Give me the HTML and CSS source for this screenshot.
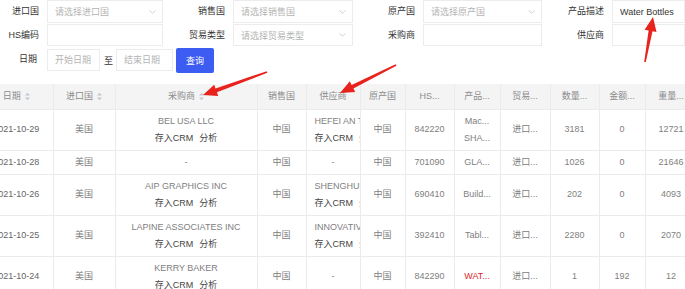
FILE: index.html
```html
<!DOCTYPE html>
<html>
<head>
    <title>海关数据查询</title>
    <link rel="stylesheet" href="styles.css">
</head>
<body>
    <div class="page">
        <!-- Filters -->
        <div class="filters">
            <label class="filter-label">进口国</label>
            <div class="field select"><span class="placeholder">请选择进口国</span><svg class="caret" width="7" height="4" viewBox="0 0 7 4"><path d="M0.5 0.5 L3.5 3.2 L6.5 0.5" fill="none" stroke="#c8cbd0" stroke-width="0.9"/></svg></div>
            <label class="filter-label">销售国</label>
            <div class="field select"><span class="placeholder">请选择销售国</span><svg class="caret" width="7" height="4" viewBox="0 0 7 4"><path d="M0.5 0.5 L3.5 3.2 L6.5 0.5" fill="none" stroke="#c8cbd0" stroke-width="0.9"/></svg></div>
            <label class="filter-label">原产国</label>
            <div class="field select"><span class="placeholder">请选择原产国</span><svg class="caret" width="7" height="4" viewBox="0 0 7 4"><path d="M0.5 0.5 L3.5 3.2 L6.5 0.5" fill="none" stroke="#c8cbd0" stroke-width="0.9"/></svg></div>
            <label class="filter-label">产品描述</label>
            <input class="field" type="text" value="Water Bottles">

            <label class="filter-label">HS编码</label>
            <input class="field" type="text">
            <label class="filter-label">贸易类型</label>
            <div class="field select"><span class="placeholder">请选择贸易类型</span><svg class="caret" width="7" height="4" viewBox="0 0 7 4"><path d="M0.5 0.5 L3.5 3.2 L6.5 0.5" fill="none" stroke="#c8cbd0" stroke-width="0.9"/></svg></div>
            <label class="filter-label">采购商</label>
            <input class="field" type="text">
            <label class="filter-label">供应商</label>
            <input class="field" type="text">

            <label class="filter-label date-label">日期</label>
            <div class="date-range">
                <input class="field date-start" type="text" placeholder="开始日期">
                <span class="date-sep">至</span>
                <input class="field date-end" type="text" placeholder="结束日期">
                <button class="search-button">查询</button>
            </div>
        </div>

        <!-- Results -->
        <div class="table-wrap">
            <table class="grid">
                <colgroup>
                    <col style="width: 73px">
                    <col style="width: 62px">
                    <col style="width: 142px">
                    <col style="width: 49px">
                    <col style="width: 54px">
                    <col style="width: 45px">
                    <col style="width: 49px">
                    <col style="width: 46px">
                    <col style="width: 50px">
                    <col style="width: 49px">
                    <col style="width: 46px">
                    <col style="width: 52px">
                </colgroup>
                <thead>
                    <tr>
                        <th><div class="cell">日期<svg class="sort" width="5" height="9" viewBox="0 0 5 9"><path d="M0 3.6 L2.5 0.8 L5 3.6Z M0 5.4 L2.5 8.2 L5 5.4Z" fill="#c5c8ce"/></svg></div></th>
                        <th><div class="cell">进口国<svg class="sort" width="5" height="9" viewBox="0 0 5 9"><path d="M0 3.6 L2.5 0.8 L5 3.6Z M0 5.4 L2.5 8.2 L5 5.4Z" fill="#c5c8ce"/></svg></div></th>
                        <th><div class="cell">采购商<svg class="sort" width="5" height="9" viewBox="0 0 5 9"><path d="M0 3.6 L2.5 0.8 L5 3.6Z M0 5.4 L2.5 8.2 L5 5.4Z" fill="#c5c8ce"/></svg></div></th>
                        <th><div class="cell">销售国</div></th>
                        <th><div class="cell">供应商</div></th>
                        <th><div class="cell">原产国</div></th>
                        <th><div class="cell">HS...</div></th>
                        <th><div class="cell">产品...</div></th>
                        <th><div class="cell">贸易...</div></th>
                        <th><div class="cell">数量...</div></th>
                        <th><div class="cell">金额...</div></th>
                        <th><div class="cell">重量...</div></th>
                    </tr>
                </thead>
                <tbody>
                    <tr>
                        <td><div class="cell date">2021-10-29</div></td>
                        <td><div class="cell">美国</div></td>
                        <td><div class="cell">BEL USA LLC<div class="actions"><span>存入CRM</span><span>分析</span></div></div></td>
                        <td><div class="cell">中国</div></td>
                        <td><div class="cell">HEFEI AN TRADING CO LTD<div class="actions"><span>存入CRM</span><span>分析</span></div></div></td>
                        <td><div class="cell">中国</div></td>
                        <td><div class="cell">842220</div></td>
                        <td><div class="cell">Mac...<br>SHA...</div></td>
                        <td><div class="cell">进口...</div></td>
                        <td><div class="cell">3181</div></td>
                        <td><div class="cell">0</div></td>
                        <td><div class="cell">12721</div></td>
                    </tr>
                    <tr>
                        <td><div class="cell date">2021-10-28</div></td>
                        <td><div class="cell">美国</div></td>
                        <td><div class="cell">-</div></td>
                        <td><div class="cell">中国</div></td>
                        <td><div class="cell">-</div></td>
                        <td><div class="cell">中国</div></td>
                        <td><div class="cell">701090</div></td>
                        <td><div class="cell">GLA...</div></td>
                        <td><div class="cell">进口...</div></td>
                        <td><div class="cell">1026</div></td>
                        <td><div class="cell">0</div></td>
                        <td><div class="cell">21646</div></td>
                    </tr>
                    <tr>
                        <td><div class="cell date">2021-10-26</div></td>
                        <td><div class="cell">美国</div></td>
                        <td><div class="cell">AIP GRAPHICS INC<div class="actions"><span>存入CRM</span><span>分析</span></div></div></td>
                        <td><div class="cell">中国</div></td>
                        <td><div class="cell">SHENGHUI PLASTIC CO LTD<div class="actions"><span>存入CRM</span><span>分析</span></div></div></td>
                        <td><div class="cell">中国</div></td>
                        <td><div class="cell">690410</div></td>
                        <td><div class="cell">Build...</div></td>
                        <td><div class="cell">进口...</div></td>
                        <td><div class="cell">202</div></td>
                        <td><div class="cell">0</div></td>
                        <td><div class="cell">4093</div></td>
                    </tr>
                    <tr>
                        <td><div class="cell date">2021-10-25</div></td>
                        <td><div class="cell">美国</div></td>
                        <td><div class="cell">LAPINE ASSOCIATES INC<div class="actions"><span>存入CRM</span><span>分析</span></div></div></td>
                        <td><div class="cell">中国</div></td>
                        <td><div class="cell">INNOVATIVE DESIGNS LTD<div class="actions"><span>存入CRM</span><span>分析</span></div></div></td>
                        <td><div class="cell">中国</div></td>
                        <td><div class="cell">392410</div></td>
                        <td><div class="cell">Tabl...</div></td>
                        <td><div class="cell">进口...</div></td>
                        <td><div class="cell">2280</div></td>
                        <td><div class="cell">0</div></td>
                        <td><div class="cell">2070</div></td>
                    </tr>
                    <tr>
                        <td><div class="cell date">2021-10-24</div></td>
                        <td><div class="cell">美国</div></td>
                        <td><div class="cell">KERRY BAKER<div class="actions"><span>存入CRM</span><span>分析</span></div></div></td>
                        <td><div class="cell">中国</div></td>
                        <td><div class="cell">-</div></td>
                        <td><div class="cell">中国</div></td>
                        <td><div class="cell">842290</div></td>
                        <td><div class="cell highlight">WAT...</div></td>
                        <td><div class="cell">进口...</div></td>
                        <td><div class="cell">1</div></td>
                        <td><div class="cell">192</div></td>
                        <td><div class="cell">12</div></td>
                    </tr>
                </tbody>
            </table>
        </div>

        <!-- Annotation arrows drawn over the screenshot -->
        <svg class="annotations" width="685" height="289" viewBox="0 0 685 289">
            <polygon points="267.3,72.8 216.9,92.2 218.2,95.9 203,95 214.2,84.7 215.5,88.4 266.7,71.2" fill="#e8221c"/>
            <polygon points="396.4,65.7 353.4,88.5 355.2,92.1 340,93 349.8,81.3 351.6,84.9 395.6,64.3" fill="#e8221c"/>
            <polygon points="644.2,61.9 648.6,30.4 644.6,29.7 653,17 656.5,31.9 652.5,31.2 645.8,62.1" fill="#e8221c"/>
        </svg>
    </div>
</body>
</html>
```

FILE: styles.css
```css
body {
    margin: 0;
    padding: 0;
    background-color: #fff;
    font-family: "Liberation Sans", "Noto Sans CJK SC", sans-serif;
    font-size: 9px;
    color: #333;
}
.page {
    position: relative;
    width: 685px;
    height: 289px;
    overflow: hidden;
}

/* Filter form */
.filters {
    display: grid;
    grid-template-columns: 47px 116px 70px 120px 70px 119px 70px 1fr;
    grid-template-rows: 23px 22px 24px;
    row-gap: 1px;
}
.filter-label {
    text-align: right;
    padding-right: 8px;
    line-height: 22px;
    white-space: nowrap;
    color: #333;
}
.date-label {
    padding-right: 10px;
    margin-top: 1px;
}
.field {
    box-sizing: border-box;
    height: 22px;
    min-width: 0;
    margin: 0;
    padding: 0 7px;
    border: 1px solid #ececec;
    background-color: #fff;
    font-family: inherit;
    font-size: 9px;
    color: #333;
    outline: none;
    width: 100%;
}
.filters > .field:nth-child(-n+8) {
    height: 23px;
}
.field::placeholder {
    color: #b4b4b4;
}
.select {
    display: flex;
    align-items: center;
    justify-content: space-between;
    padding-right: 6px;
}
.placeholder {
    color: #b4b4b4;
}
.date-range {
    grid-column: 2 / span 3;
    display: flex;
    align-items: center;
    height: 24px;
    margin-top: 1px;
}
.date-start {
    width: 53px;
}
.date-sep {
    margin: 0 3px 0 4px;
    color: #333;
}
.date-end {
    width: 57px;
}
.search-button {
    width: 38px;
    height: 25px;
    margin-left: 3px;
    border: none;
    border-radius: 2px;
    background-color: #3d5cf2;
    color: #fff;
    font-family: inherit;
    font-size: 9px;
    cursor: pointer;
}

/* Result table */
.table-wrap {
    margin-top: 13px;
    overflow: hidden;
}
.grid {
    table-layout: fixed;
    border-collapse: collapse;
    width: 717px;
    margin-left: -20px;
}
.grid th,
.grid td {
    padding: 3px 0;
    border-right: 1px solid #ebebeb;
    border-bottom: 1px solid #ebebeb;
    text-align: center;
    vertical-align: middle;
}
.grid th {
    height: 25px;
    box-sizing: border-box;
    padding: 0;
    background-color: #f4f4f5;
    font-weight: normal;
    color: #8c8c8c;
}
.grid td {
    color: #808080;
}
.cell {
    padding: 0 8px;
    line-height: 17px;
    white-space: nowrap;
    overflow: hidden;
}
.grid th .cell {
    line-height: 16px;
    display: flex;
    align-items: center;
    justify-content: center;
}
.sort {
    margin-left: 4px;
}
.cell.date {
    color: #666;
}
.actions {
    color: #444;
}
.actions span + span {
    margin-left: 6px;
}
.highlight {
    color: #e0262b;
}

/* Arrows */
.annotations {
    position: absolute;
    top: 0;
    left: 0;
    pointer-events: none;
}
```
